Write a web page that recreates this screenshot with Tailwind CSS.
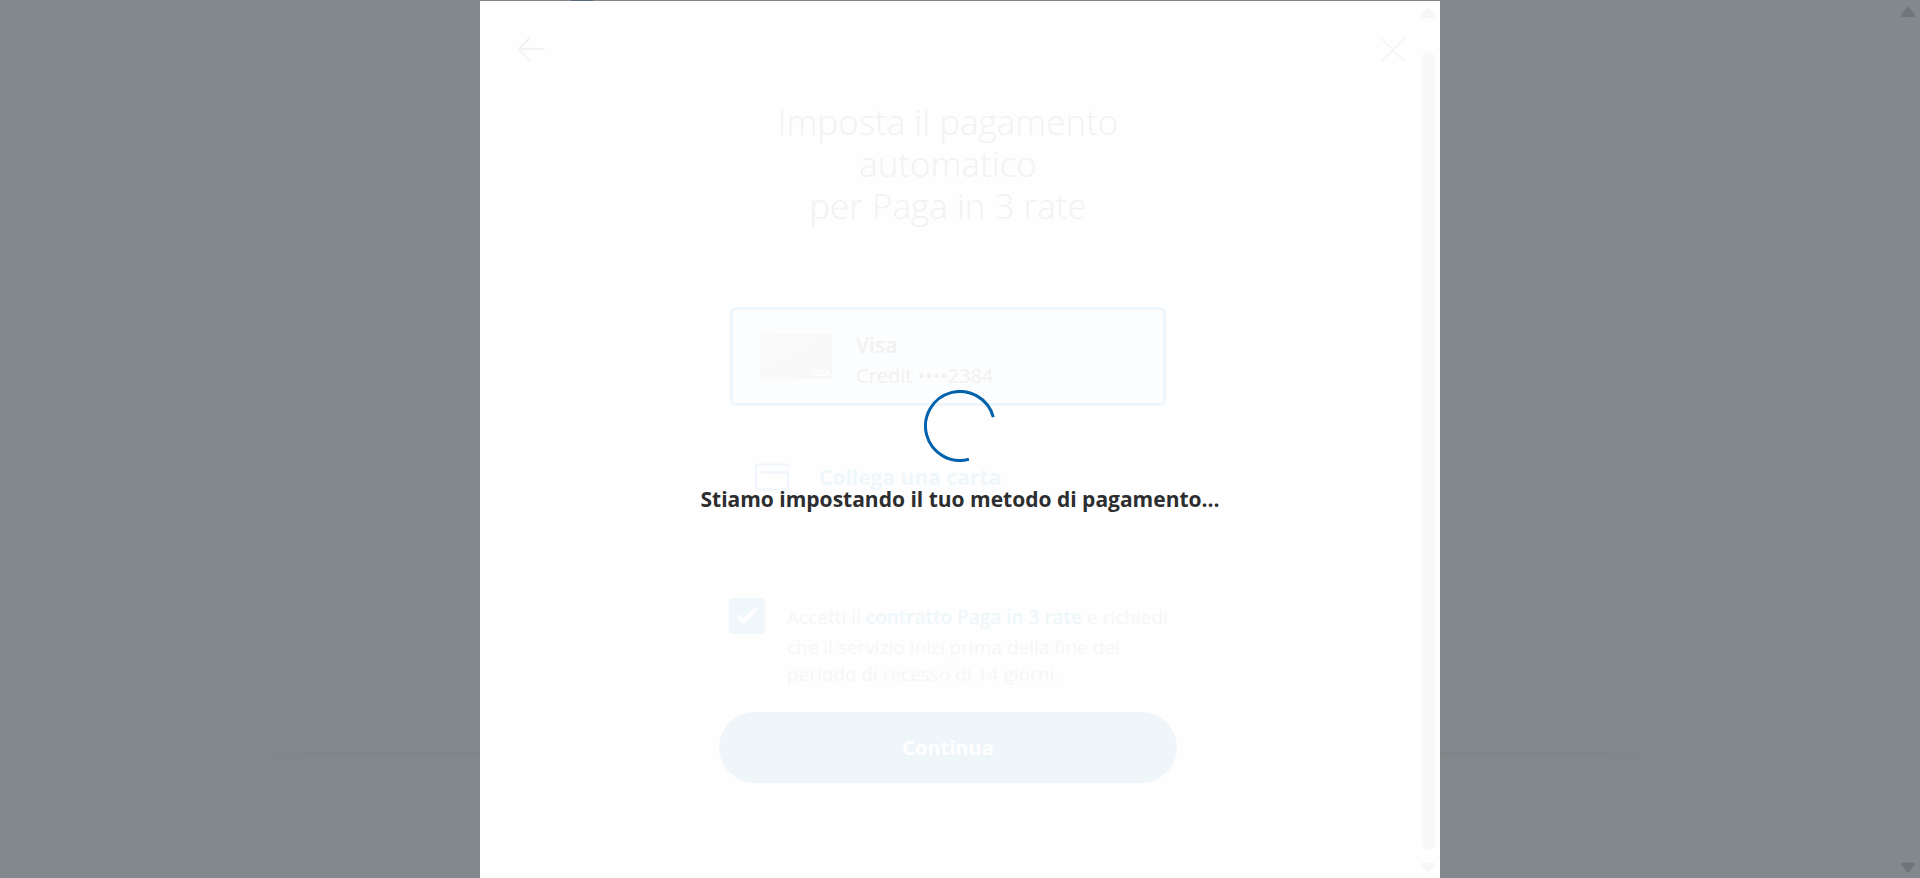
<!DOCTYPE html>
<html lang="it">
<head>
<meta charset="utf-8">
<title>Paga in 3 rate</title>
<script src="https://cdn.jsdelivr.net/npm/@tailwindcss/browser@4"></script>
</head>
<body class="relative flex h-screen justify-center overflow-hidden bg-[#82888b] font-['Open_Sans','Noto_Sans',sans-serif]">
  <!-- Dimmed page behind the dialog -->
  <div class="absolute inset-x-0 top-0 h-px" aria-hidden="true"><div class="ml-[571px] h-px w-[22px] bg-[#5a6580]"></div></div>
  <div class="absolute inset-x-0 bottom-[120px] h-1.5 bg-linear-to-r from-[#82888b] via-[#7d8285] to-[#82888b]" aria-hidden="true"></div>
  <div class="absolute inset-y-0 right-0 flex w-6 flex-col items-center justify-between pt-1.5 pb-1" aria-hidden="true">
    <svg class="h-3 w-4" viewBox="0 0 16 12"><path d="M2.500 9.500 8 2.500 13.500 9.500Z" fill="#70757a" stroke="#70757a" stroke-width="3" stroke-linejoin="round"/></svg>
    <svg class="h-3 w-4" viewBox="0 0 16 12"><path d="M2.500 2 8 9 13.500 2Z" fill="#70757a" stroke="#70757a" stroke-width="3" stroke-linejoin="round"/></svg>
  </div>

  <main class="relative mt-px flex w-1/2 bg-[#fefefe]" role="dialog" aria-label="Imposta il pagamento automatico">
    <div class="flex flex-1 flex-col">
      <header class="flex h-24 items-center justify-between pr-[11px] pl-[35px]">
        <button class="flex size-8 items-center justify-center" aria-label="Indietro">
          <svg class="h-6 w-7" viewBox="0 0 28 24" fill="none" stroke="#f2f2f2" stroke-width="2" stroke-linecap="round" stroke-linejoin="round"><path d="M27 12H1.500M12.500 1 1.500 12l11 11"/></svg>
        </button>
        <button class="flex size-6 items-center justify-center" aria-label="Chiudi">
          <svg class="size-6" viewBox="0 0 24 24" fill="none" stroke="#f3f3f3" stroke-width="1.500" stroke-linecap="round"><path d="M1 2l22 22M23 2 1 24"/></svg>
        </button>
      </header>

      <form class="mx-auto flex w-[458px] flex-col">
        <h1 class="mt-1 text-center text-[35px] leading-[42px] font-light text-[#f2f2f2]">Imposta il pagamento<br>automatico<br>per Paga in 3 rate</h1>

        <div class="mx-[11px] mt-20 flex h-[99px] items-center rounded-md border-3 border-[#eef6fb] bg-[#fcfdfe] pl-[27px]">
          <div class="flex h-[45px] w-[72px] items-end justify-end bg-linear-to-br from-[#fafafa] to-[#f8f8f8] px-0.5 text-[9px] leading-3 font-bold text-white italic">VISA</div>
          <div class="ml-6 pt-1.5 text-[#f1f1f1]">
            <p class="text-[21px] leading-8 font-semibold">Visa</p>
            <p class="text-[20px] leading-[30px]">Credit ••••2384</p>
          </div>
        </div>

        <a href="#carta" class="mt-[51px] ml-9 flex h-10 items-center gap-[30px] text-[21px] leading-8 font-bold text-[#eff7fb]">
          <svg class="h-7 w-[34px]" viewBox="0 0 34 28" fill="none" stroke="#f0f6fb" stroke-width="2" stroke-linecap="round" stroke-linejoin="round"><path d="M33 5V2.500q0-1-1-1H2q-1 0-1 1v23q0 1 1 1h30q1 0 1-1V9.500H7"/></svg>
          Collega una carta
        </a>

        <div class="mt-[101px] ml-2.5 flex gap-[22px]">
          <span class="relative size-9 shrink-0">
            <input id="terms" type="checkbox" checked class="block size-9 appearance-none rounded-sm bg-[#eff7fb]">
            <svg class="pointer-events-none absolute inset-0 size-9" viewBox="0 0 36 36" fill="none" stroke="#fefefe" stroke-width="4" stroke-linecap="round" stroke-linejoin="round"><path d="m9.500 18.500 5 5L27 11"/></svg>
          </span>
          <label for="terms" class="pt-0.5 text-[19px] leading-[27px] whitespace-nowrap text-[#f6f6f6]"><span class="block leading-[34px]">Accetti il <a href="#contratto" class="font-semibold text-[#eff7fb]">contratto Paga in 3 rate</a> e richiedi</span>che il servizio inizi prima della fine del<br>periodo di recesso di 14 giorni.</label>
        </div>

        <button type="button" class="mt-6 h-[71px] rounded-full bg-[#eff6fa] text-[20px] font-bold text-white">Continua</button>
      </form>
    </div>

    <div class="flex w-6 flex-col items-center pt-1.5 pb-1" aria-hidden="true">
      <svg class="h-3 w-4" viewBox="0 0 16 12"><path d="M2.500 9.500 8 2.500 13.500 9.500Z" fill="#f7f7f7" stroke="#f7f7f7" stroke-width="3" stroke-linejoin="round"/></svg>
      <div class="mt-[33px] mb-3 w-[13px] flex-1 rounded-full bg-[#f8f8f8]"></div>
      <svg class="h-3 w-4" viewBox="0 0 16 12"><path d="M2.500 2 8 9 13.500 2Z" fill="#f7f7f7" stroke="#f7f7f7" stroke-width="3" stroke-linejoin="round"/></svg>
    </div>

    <!-- Loading overlay -->
    <div class="absolute inset-0 flex flex-col items-center justify-center pt-[57px] pb-8" role="status">
      <svg class="size-[72px]" viewBox="0 0 72 72" fill="none" stroke="#0062ad" stroke-width="3"><path d="M44.930 69.320A34.500 34.500 0 1 1 69.320 27.070"/></svg>
      <p class="mt-[21px] text-[21px] leading-8 font-bold whitespace-nowrap text-[#2c2e2f]">Stiamo impostando il tuo metodo di pagamento...</p>
    </div>
  </main>
</body>
</html>
